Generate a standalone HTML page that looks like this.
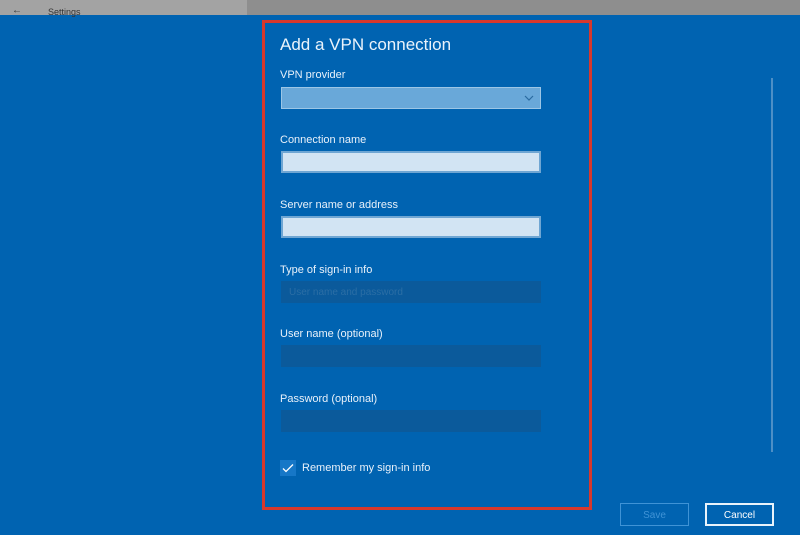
<!DOCTYPE html><html><head><style>
body{margin:0;width:800px;height:535px;background:#0063b1;position:relative;overflow:hidden;font-family:"Liberation Sans",sans-serif;color:#fff}
.a{position:absolute}
.lbl{position:absolute;left:280px;font-size:11px;color:#e8f1fa}
.f{position:absolute;left:281px;width:260px;height:22px;box-sizing:border-box}
.light{background:#d2e4f3;border:2px solid #6fa6d3}
.dark{background:#0b5a9b}
</style></head><body>
<div class="a" style="left:0;top:0;width:247px;height:15px;background:#a3a3a3"></div>
<div class="a" style="left:247px;top:0;width:553px;height:15px;background:#8e8e8e"></div>
<div class="a" style="left:12px;top:5px;font-size:10px;color:#333">&#8592;</div>
<div class="a" style="left:48px;top:7px;font-size:9px;color:#333">Settings</div>
<div class="a" style="left:262px;top:20px;width:330px;height:490px;box-sizing:border-box;border:3px solid #d8382c"></div>
<div class="a" style="left:280px;top:35px;font-size:17px;color:#eaf3fb">Add a VPN connection</div>
<div class="lbl" style="top:69px">VPN provider</div>
<div class="f" style="top:87px;background:#69a8d9;border:1px solid #9cc6e6"></div>
<svg class="a" style="left:524px;top:94px" width="10" height="8"><path d="M1 2l4 4 4-4" stroke="#2a6aa0" fill="none" stroke-width="1.2"/></svg>
<div class="lbl" style="top:134px">Connection name</div>
<div class="f light" style="top:151px"></div>
<div class="lbl" style="top:199px">Server name or address</div>
<div class="f light" style="top:216px"></div>
<div class="lbl" style="top:264px">Type of sign-in info</div>
<div class="f dark" style="top:281px"><span style="position:absolute;left:8px;top:6px;font-size:10px;color:#2b6ea5">User name and password</span></div>
<div class="lbl" style="top:328px">User name (optional)</div>
<div class="f dark" style="top:345px"></div>
<div class="lbl" style="top:393px">Password (optional)</div>
<div class="f dark" style="top:410px"></div>
<div class="a" style="left:280px;top:460px;width:16px;height:16px;background:#1677c7"></div>
<svg class="a" style="left:280px;top:460px" width="16" height="16"><path d="M3 8.5l3 3 7-7" stroke="#fff" fill="none" stroke-width="1.3"/></svg>
<div class="a" style="left:302px;top:462px;font-size:11px;color:#e8f1fa">Remember my sign-in info</div>
<div class="a" style="left:771px;top:78px;width:2px;height:374px;background:#4d8fc6"></div>
<div class="a" style="left:620px;top:503px;width:69px;height:23px;box-sizing:border-box;border:1px solid #3f93d6;font-size:10px;color:#3f93d6;text-align:center;line-height:23px">Save</div>
<div class="a" style="left:705px;top:503px;width:69px;height:23px;box-sizing:border-box;border:2px solid #e8f3fb;font-size:10px;color:#fff;text-align:center;line-height:21px">Cancel</div>
</body></html>
